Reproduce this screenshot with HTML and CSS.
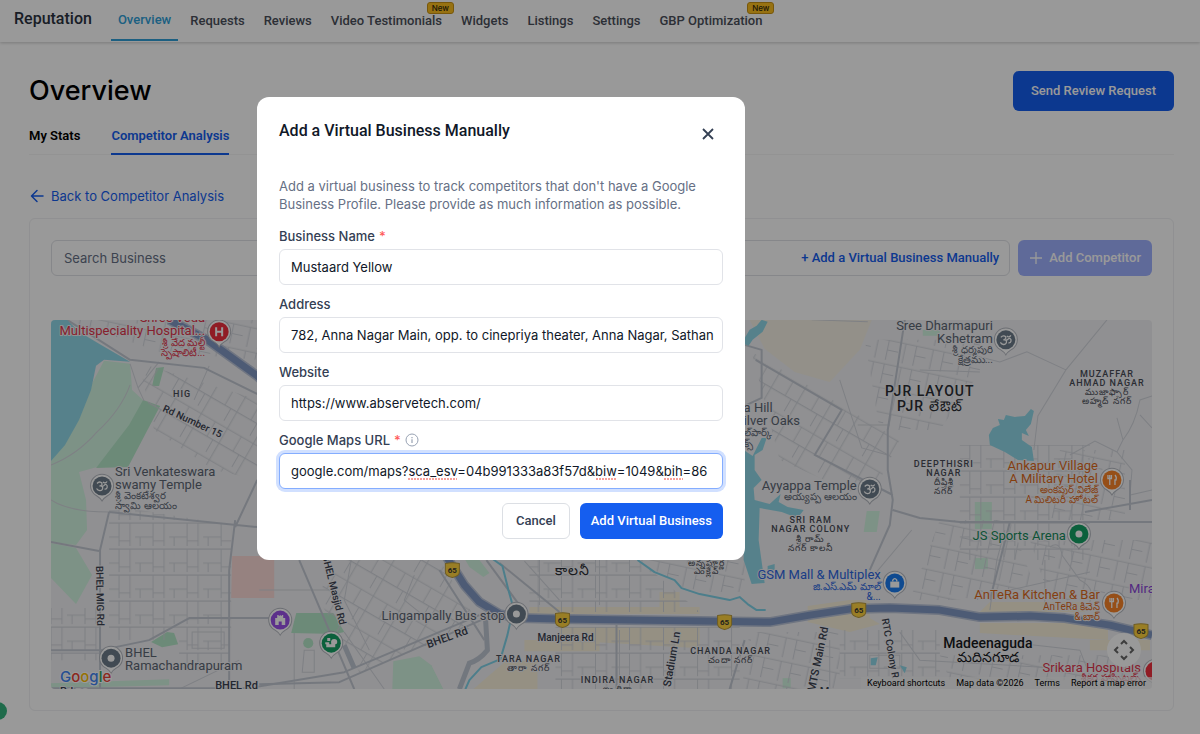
FILE: index.html
```html
<!DOCTYPE html>
<html lang="en">
<head>
<meta charset="utf-8">
<meta name="viewport" content="width=device-width, initial-scale=1">
<title>Reputation – Competitor Analysis</title>
<link rel="stylesheet" href="styles.css">
</head>
<body>
<header class="topbar">
  <span class="brand">Reputation</span>
  <nav class="topnav" aria-label="Reputation">
    <a class="navlink active" href="#overview">Overview</a>
    <a class="navlink" href="#requests">Requests</a>
    <a class="navlink" href="#reviews">Reviews</a>
    <a class="navlink" href="#video">Video Testimonials<span class="badge">New</span></a>
    <a class="navlink" href="#widgets">Widgets</a>
    <a class="navlink" href="#listings">Listings</a>
    <a class="navlink" href="#settings">Settings</a>
    <a class="navlink" href="#gbp">GBP Optimization<span class="badge">New</span></a>
  </nav>
</header>

<main class="page">
  <div class="page-head">
    <h1>Overview</h1>
    <button class="btn primary large" type="button">Send Review Request</button>
  </div>
  <nav class="tabs" aria-label="Overview sections">
    <a class="tab" href="#stats">My Stats</a>
    <a class="tab current" href="#competitors">Competitor Analysis</a>
  </nav>
  <a class="back" href="#back">
    <svg width="16" height="16" viewBox="0 0 16 16" aria-hidden="true"><path d="M14 8H3M8 2.500L2.500 8L8 13.500" fill="none" stroke="currentColor" stroke-width="1.500" stroke-linecap="round" stroke-linejoin="round"/></svg>
    Back to Competitor Analysis
  </a>

  <section class="card">
    <div class="search-row">
      <div class="search-box">
        <input class="search-input" type="text" placeholder="Search Business" aria-label="Search Business">
        <button class="link-btn" type="button">+ Add a Virtual Business Manually</button>
      </div>
      <button class="btn add" type="button">
        <svg width="14" height="14" viewBox="0 0 14 14" aria-hidden="true"><path d="M7 1V13M1 7H13" fill="none" stroke="currentColor" stroke-width="1.300"/></svg>
        Add Competitor
      </button>
    </div>

    <div class="map">
      <svg class="map-canvas" viewBox="52 320 1100 369" preserveAspectRatio="xMidYMid slice" role="img" aria-label="Map">
        <defs>
          <symbol id="pin" viewBox="-14 -14 28 30" overflow="visible">
            <path class="pin-edge" d="M0 15C-2 11-5 10.500-8 8A11.500 11.500 0 1 1 8 8C5 10.500 2 11 0 15Z"/>
            <circle r="9.500" fill="currentColor"/>
          </symbol>
          <symbol id="om" viewBox="-14 -14 28 30" overflow="visible">
            <path d="M-5-2.500C-3-5 0-4 0-2C0-.5-2 0-2.500 0C0-.5 1 1 .5 3C-.5 5.500-4 5-5.500 2.500M0 0C2 1 2-2 4-1.500C6-.5 5.500 3.500 2.500 3M1-4C2-2.500 4-2.800 5-4.500" class="om-line"/>
          </symbol>
          <symbol id="shield" viewBox="-9 -8 18 16" overflow="visible">
            <path d="M-7-6.500Q0-8 7-6.500V2Q7 6 0 7.500Q-7 6-7 2Z" class="shield-plate"/>
            <text class="shield-num" y="3">65</text>
          </symbol>
          <pattern id="blocks" width="34" height="26" patternUnits="userSpaceOnUse"><path class="street" d="M0 3H34M0 17H18M18 3V26M29 3V26M5 17V26M18 21H29"/></pattern>
          <pattern id="blocks-tilt" width="30" height="36" patternUnits="userSpaceOnUse" patternTransform="rotate(30)"><path class="street" d="M0 5H30M0 22H30M8 5V22M22 0V36M15 22V36"/></pattern>
          <pattern id="blocks-lean" width="28" height="24" patternUnits="userSpaceOnUse" patternTransform="rotate(12)"><path class="street" d="M0 4H28M6 4V24M17 4V24M17 14H28"/></pattern>
        </defs>

        <rect class="land" x="0" y="300" width="1300" height="410"/>

        <g class="park">
          <path d="M105 361L131 364L133 390L145 401L125 440L98 467L80 472L87 500L88 530L77 545L52 542V461Z"/>
          <path d="M52 543L77 548L93 575L77 604L52 578Z"/>
          <path class="dense" d="M144 400L161 406L129 467L97 468L130 425Z"/>
          <path class="dense" d="M157 368L165 367L160 386L153 386Z"/>
          <path class="dense" d="M152 642L168 632L175 633L179 644L163 647Z"/>
          <path d="M52 683L170 679V685L52 688Z"/>
          <path class="dense" d="M297 613H334L345 632L336 634L292 633Z"/>
          <path d="M394 661L420 656L432 665L444 689H393Z"/>
          <circle class="dense" cx="309" cy="643" r="5"/>
          <path d="M466 560H480L490 573L484 577L470 567Z"/>
          <path d="M867 511H880L877 532H864Z"/><path d="M975 502H992V529H975Z"/>
          <path d="M975 558H988V569H975Z"/><path d="M923 330H940V336H923Z"/><path d="M783 678H791V688H783Z"/>
        </g>
        <path class="sand" d="M750 320H872L860 350L830 382L795 372L765 349Z"/>
        <g class="shops">
          <path d="M530 607H700V614H530ZM560 627H700V648L560 640ZM660 592H680V614H660Z"/>
          <path d="M474 689L505 662L538 660V689ZM525 640H600V651H525Z"/>
          <path d="M808 606L850 600H870V618L880 624L850 632L808 622ZM980 612L990 602H1085V612ZM980 623H1080L1108 630V640L980 633ZM1090 640H1150V650H1090Z"/>
        </g>
        <path class="clinic" d="M233 556H275V598H232Z"/>

        <g>
          <path fill="url(#blocks)" d="M110 505L232 525V640H110ZM52 608H100V660H52ZM180 670H230V640H180Z"/>
          <path fill="url(#blocks-tilt)" d="M140 363L260 400V480L215 470L155 430ZM330 560H440L480 625L360 672L320 600Z"/>
          <path fill="url(#blocks-tilt)" d="M752 352L900 440L870 500L780 460Z"/>
          <path fill="url(#blocks)" d="M556 627H740V689H556ZM530 560H640L700 612H530ZM840 630H940V678H840Z"/>
          <path fill="url(#blocks-lean)" d="M865 340H980V372L940 430H880ZM940 520H1010L1040 600H910ZM1060 450H1125V520H1050ZM750 632H840V689H742ZM940 655H1130V680H950Z"/>
          <path fill="url(#blocks)" d="M960 445H1090V560H960Z"/>
          <path fill="url(#blocks-lean)" d="M68 320H258V360L160 352ZM1030 540H1152V600H1050ZM640 560H745V592H690Z"/>
        </g>

        <g class="street">
          <path d="M131 364L139 388L145 401M131 385Q122 410 98 432Q78 455 52 465M52 500Q70 512 110 512M139 388L160 362M210 366L195 400M240 660L180 689M193 632V648H225V632Z"/>
          <path d="M295 633V689M345 632L385 689M260 590H330M305 650H315V672H303ZM352 560L345 600L370 650M415 575L405 600L430 620M540 560V605M600 560V605M620 630V689"/>
          <path d="M1107 320Q1070 365 1066 370L1038 416L1034 450M960 352L1000 362L1027 352L1066 370M1117 418L1123 440L1117 452M1123 440Q1135 425 1140 400L1152 396M1140 415L1152 428M1070 455L1095 441L1117 452L1132 470L1130 495L1152 490"/>
          <path d="M812 320L868 322M840 380L862 448L888 455M858 425H890M920 370L980 372M912 530L870 580M1050 547Q1060 540 1062 555L1080 580Q1100 590 1085 610"/>
          <path d="M1005 530L997 560L990 610M1045 560V605M1010 590L1090 572M900 632L920 660L1060 668M990 640L1080 650L1095 689M830 640V689M870 655H900V668H870ZM525 561L560 600"/>
        </g>
        <g class="road">
          <path d="M110 512L258 527M110 512L101 550V689M52 542L100 551M236 520L230 570V689M258 480L236 527M52 650H102L150 640L190 618H270M52 688H250L345 672L480 615"/>
          <path d="M68 320L95 337L131 360L205 368L260 395M300 560L355 689M260 684L340 682L500 612M485 640L440 570M745 640L730 689M617 625V689"/>
          <path d="M905 320L888 430V470L893 500L890 525L870 570M756 360L842 410L815 455L893 495M893 510L920 518L960 522H1152M1010 522L990 600M1085 512L1152 500M1130 480V510"/>
          <path d="M745 345L762 350V398L745 406M500 563L560 612M487 560L520 605"/>
        </g>
        <path class="avenue" d="M486 616L488 650Q480 660 470 663L460 689M345 645L355 668"/>

        <g class="water">
          <path d="M52 320H68L80 332L100 344L131 362L105 360L97 366L92 390L80 420L66 445L52 461Z"/>
          <path d="M744 340L750 330L757 326L762 320L768 322L763 332L753 340L749 346L744 344Z"/>
          <path d="M744 450L753 456L762 438L767 438L763 450L755 455L755 470L762 480L754 488L755 500L770 504L781 494L779 502L788 507L804 510L798 518L782 512L760 508L759 540L765 583L752 584L744 560Z"/>
          <path d="M990 445L989 435L993 428L1000 425L998 419L1004 420L1006 415L1015 417L1025 416L1031 409L1034 411L1031 424L1026 430L1029 436L1022 433L1022 440L1032 447L1034 461L1018 460L1005 452Z"/>
          <path d="M768 566L775 564V570H768ZM871 658L878 657L876 665H871ZM900 665L907 667L905 673Z"/>
        </g>
        <path class="stream" d="M492 558L503 566L509 590L514 608L508 635L501 659L482 667L470 680L466 689M638 560L655 572L675 580L682 588L700 594L730 600L740 597L748 604L757 610H766"/>
        <path class="highway-edge" d="M170 320L208 340L258 376L443 550L465 585L480 602L500 614L520 618L560 619L700 621L770 622L810 615L850 609L890 608L940 610L980 617L1030 616L1065 618L1110 625L1152 635"/>
        <path class="highway" d="M170 320L208 340L258 376L443 550L465 585L480 602L500 614L520 618L560 619L700 621L770 622L810 615L850 609L890 608L940 610L980 617L1030 616L1065 618L1110 625L1152 635"/>

        <g class="roadname">
          <text transform="translate(163 411) rotate(25)">Rd Number 15</text>
          <text transform="translate(97 566) rotate(89)">BHEL MIG Rd</text>
          <text transform="translate(323 556) rotate(76)">BHEL Masjid Rd</text>
          <text class="wide" transform="translate(429 648) rotate(-20)">BHEL Rd</text>
          <text class="wide" x="216" y="689">BHEL Rd</text>
          <text x="538" y="641">Manjeera Rd</text>
          <text class="wide" transform="translate(671 687) rotate(-80)">Stadium Ln</text>
          <text class="wide" transform="translate(815 692) rotate(-78)">MTS Main Rd</text>
          <text transform="translate(882 619) rotate(80)">RTC Colony R</text>
          <text class="wide" x="61" y="695">Rd no</text>
          <text class="wide" x="820" y="695">Ma...</text>
        </g>

        <g class="area">
          <text x="183" y="397">HIG</text>
          <text x="529" y="662">TARA NAGAR<tspan x="529" dy="9">తారా నగర్</tspan></text>
          <text x="618" y="683">INDIRA NAGAR<tspan x="618" dy="9">ఇందిరా</tspan></text>
          <text x="731" y="654">CHANDA NAGAR<tspan x="731" dy="9">చందా నగర్</tspan></text>
          <text x="811" y="523">SRI RAM<tspan x="811" dy="9">NAGAR COLONY</tspan><tspan x="811" dy="10">శ్రీ రామ్</tspan><tspan x="811" dy="9">నగర్ కాలనీ</tspan></text>
          <text x="944" y="467">DEEPTHISRI<tspan x="944" dy="9">NAGAR</tspan><tspan x="944" dy="9">దీప్తిశ్రీ</tspan><tspan x="944" dy="9">నగర్</tspan></text>
          <text x="1107" y="377">MUZAFFAR<tspan x="1107" dy="9">AHMAD NAGAR</tspan><tspan x="1107" dy="9">ముజాఫ్ఫార్</tspan><tspan x="1107" dy="9">అహ్మద్ నగర్</tspan></text>
          <text class="big" x="930" y="396">PJR LAYOUT<tspan x="930" dy="15">PJR లేఔట్</tspan></text>
          <text x="707" y="566">అన్నపూర్ణ<tspan x="707" dy="8">ఎంక్లేవ్</tspan></text>
          <text class="big" x="573" y="575">కాలనీ</text>
        </g>
        <g class="town"><text x="988" y="648">Madeenaguda<tspan x="988" dy="14">మదినగూడ</tspan></text></g>

        <g class="place gray">
          <text x="116" y="476">Sri Venkateswara<tspan x="116" dy="13">swamy Temple</tspan><tspan class="te" x="116" dy="10">శ్రీ వెంకటేశ్వర</tspan><tspan class="te" x="116" dy="10">స్వామి ఆలయం</tspan></text>
          <text x="126" y="657">BHEL<tspan x="126" dy="13">Ramachandrapuram</tspan></text>
          <text class="end" x="506" y="620">Lingampally Bus stop</text>
          <text class="end" x="857" y="490">Ayyappa Temple<tspan class="te" x="857" dy="10">అయ్యప్ప ఆలయం</tspan></text>
          <text class="end" x="993" y="330">Sree Dharmapuri<tspan x="993" dy="13">Kshetram</tspan><tspan class="te" x="993" dy="10">శ్రీ ధర్మపురి</tspan><tspan class="te" x="993" dy="10">క్షేత్రము...</tspan></text>
          <text x="744" y="412">a Hill<tspan x="744" dy="13">ilver Oaks</tspan><tspan class="te" x="744" dy="11">ల్‌పార్క్</tspan><tspan class="te" x="744" dy="11">క్స్</tspan></text>
        </g>
        <g class="place red">
          <text class="end" x="206" y="322">Shree Veda<tspan x="206" dy="13">Multispeciality Hospital...</tspan><tspan class="te" x="206" dy="11">శ్రీ వేద మల్టీ</tspan><tspan class="te" x="206" dy="10">స్పెషాలిటీ...</tspan></text>
          <text class="end" x="1141" y="672">Srikara Hospitals<tspan class="te" x="1141" dy="9">శ్రీకర హాస్పిటల్స్</tspan></text>
        </g>
        <g class="place orange">
          <text class="end" x="1098" y="470">Ankapur Village<tspan x="1098" dy="13">A Military Hotel</tspan><tspan class="te" x="1098" dy="10">అంకపుర్ విలేజ్</tspan><tspan class="te" x="1098" dy="10">A మిలిటరీ హోటల్</tspan></text>
          <text class="end" x="1100" y="599">AnTeRa Kitchen &amp; Bar<tspan class="te" x="1100" dy="11">AnTeRa కిచెన్</tspan><tspan class="te" x="1100" dy="10">&amp; బార్</tspan></text>
        </g>
        <g class="place green"><text class="end" x="1066" y="540">JS Sports Arena</text></g>
        <g class="place blue"><text class="end" x="881" y="579">GSM Mall &amp; Multiplex<tspan class="te" x="881" dy="11">జి.ఎస్.ఎమ్ మాల్</tspan><tspan class="te" x="881" dy="10">&amp;...</tspan></text></g>
        <g class="place purple"><text x="1129" y="593">Mira</text></g>

        <g transform="translate(220 332)" class="pin-red"><use href="#pin" x="-14" y="-14" width="28" height="30"/><path class="glyph" d="M-3-4.500V4.500M3-4.500V4.500M-3 0H3"/></g>
        <g transform="translate(103 486)" class="pin-gray"><use href="#pin" x="-14" y="-14" width="28" height="30"/><use href="#om" x="-14" y="-14" width="28" height="30"/></g>
        <g transform="translate(1006 340)" class="pin-gray"><use href="#pin" x="-14" y="-14" width="28" height="30"/><use href="#om" x="-14" y="-14" width="28" height="30"/></g>
        <g transform="translate(870 489)" class="pin-gray"><use href="#pin" x="-14" y="-14" width="28" height="30"/><use href="#om" x="-14" y="-14" width="28" height="30"/></g>
        <g transform="translate(112 658)" class="pin-gray"><use href="#pin" x="-14" y="-14" width="28" height="30"/><circle class="dot" r="3.500"/></g>
        <g transform="translate(517 614)" class="pin-gray"><use href="#pin" x="-14" y="-14" width="28" height="30"/><circle class="dot" r="3.500"/></g>
        <g transform="translate(1079 534)" class="pin-green"><use href="#pin" x="-14" y="-14" width="28" height="30"/><circle class="dot" r="3.500"/></g>
        <g transform="translate(332 643)" class="pin-green"><use href="#pin" x="-14" y="-14" width="28" height="30"/><path class="dot" d="M-6-1H-2V1H0Q-1-4 3-4Q6-4 6-1Q6 1 4 1V4H-5V1H-6ZM-4-5H-1V-2H-4Z"/></g>
        <g transform="translate(281 620)" class="pin-purple"><use href="#pin" x="-14" y="-14" width="28" height="30"/><path class="dot" d="M-5 5V-2H-3V-5H-1.500V-4H-.5V-5H.5V-4H1.500V-5H3V-2H5V5H1.500V1.500H-1.500V5Z"/></g>
        <g transform="translate(895 583)" class="pin-blue"><use href="#pin" x="-14" y="-14" width="28" height="30"/><path class="dot" d="M-4.500-1.500H4.500V4.500H-4.500Z"/><path class="bag" d="M-2-1.500V-3Q0-6 2-3V-1.500"/></g>
        <g transform="translate(1112 480)" class="pin-orange"><use href="#pin" x="-14" y="-14" width="28" height="30"/><path class="bag" d="M-4-5V-1.500H-.5V-5M-2.200-5V5M3-5Q5-3 4 0H3V5"/></g>
        <g transform="translate(1114 603)" class="pin-orange"><use href="#pin" x="-14" y="-14" width="28" height="30"/><path class="bag" d="M-4-5V-1.500H-.5V-5M-2.200-5V5M3-5Q5-3 4 0H3V5"/></g>
        <g transform="translate(1155 671)" class="pin-red"><use href="#pin" x="-14" y="-14" width="28" height="30"/></g>

        <use href="#shield" x="444" y="562" width="18" height="16"/>
        <use href="#shield" x="554" y="612" width="18" height="16"/>
        <use href="#shield" x="716" y="614" width="18" height="16"/>
        <use href="#shield" x="850" y="602" width="18" height="16"/>
        <use href="#shield" x="1132" y="623" width="18" height="16"/>

        <text class="logo" x="61" y="682"><tspan class="g-blue">G</tspan><tspan class="g-red">o</tspan><tspan class="g-yellow">o</tspan><tspan class="g-blue">g</tspan><tspan class="g-green">l</tspan><tspan class="g-red">e</tspan></text>
      </svg>
      <button class="map-control" type="button" aria-label="Map camera controls">
        <svg width="22" height="22" viewBox="0 0 22 22" aria-hidden="true"><path d="M8 5L11 2L14 5M8 17L11 20L14 17M5 8L2 11L5 14M17 8L20 11L17 14" fill="none" stroke="currentColor" stroke-width="2"/></svg>
      </button>
      <div class="map-foot">
        <button class="foot-item" type="button">Keyboard shortcuts</button>
        <span class="foot-item">Map data ©2026</span>
        <a class="foot-item" href="#terms">Terms</a>
        <a class="foot-item" href="#report">Report a map error</a>
      </div>
    </div>
  </section>
</main>

<button class="helper" type="button" aria-label="Open help"></button>

<div class="overlay">
  <form class="modal" role="dialog" aria-modal="true" aria-labelledby="modal-title">
    <div class="modal-head">
      <h2 id="modal-title">Add a Virtual Business Manually</h2>
      <button class="close" type="button" aria-label="Close">
        <svg width="12" height="12" viewBox="0 0 12 12" aria-hidden="true"><path d="M1 1L11 11M11 1L1 11" fill="none" stroke="currentColor" stroke-width="1.800"/></svg>
      </button>
    </div>
    <p class="intro">Add a virtual business to track competitors that don't have a Google Business Profile. Please provide as much information as possible.</p>
    <div class="field">
      <label for="name">Business Name <span class="req">*</span></label>
      <input class="text" id="name" type="text" value="Mustaard Yellow">
    </div>
    <div class="field">
      <label for="address">Address</label>
      <input class="text" id="address" type="text" value="782, Anna Nagar Main, opp. to cinepriya theater, Anna Nagar, Sathan">
    </div>
    <div class="field">
      <label for="site">Website</label>
      <input class="text" id="site" type="text" value="https://www.abservetech.com/">
    </div>
    <div class="field">
      <label for="url">Google Maps URL <span class="req">*</span>
        <svg class="info" width="14" height="14" viewBox="0 0 14 14" aria-hidden="true"><circle cx="7" cy="7" r="6" fill="none" stroke="currentColor"/><path d="M7 6.300V10M7 4V5.200" stroke="currentColor" stroke-width="1.200"/></svg>
      </label>
      <div class="checked">
        <input class="text focused" id="url" type="text" spellcheck="false" value="google.com/maps?sca_esv=04b991333a83f57d&amp;biw=1049&amp;bih=86">
        <svg class="squiggle" width="444" height="36" viewBox="0 0 444 36" aria-hidden="true"><path d="M129 26H178M317 26H338M385 26H404"/></svg>
      </div>
    </div>
    <div class="actions">
      <button class="btn plain" type="button">Cancel</button>
      <button class="btn primary snug" type="submit">Add Virtual Business</button>
    </div>
  </form>
</div>
</body>
</html>
```
FILE: styles.css
```css
* { box-sizing: border-box; }
body {
  margin: 0;
  min-height: 100vh;
  background: #fff;
  color: #000;
  font: 400 13px/18px Inter, "Noto Sans", sans-serif;
}
a { color: inherit; text-decoration: none; }
button, input { font: inherit; color: inherit; }
button { cursor: pointer; }
h1, h2, p { margin: 0; }

/* Top bar */
.topbar {
  display: flex;
  align-items: center;
  height: 42px;
  padding-left: 14px;
  box-shadow: 0 1px 3px rgba(0, 0, 0, .2);
  font-family: Roboto, sans-serif;
  font-weight: 500;
}
.brand { margin: 0 19px 4px 0; font-size: 16px; color: #2b3240; }
.topnav { display: flex; align-self: stretch; gap: 5px; }
.navlink {
  position: relative;
  height: 41px;
  padding: 12px 7px 0;
  color: #4a4f5a;
}
.navlink.active { padding-top: 11px; color: #2f9fd8; border-bottom: 2px solid #2f9fd8; }
.badge {
  position: absolute;
  top: 2px;
  right: -5px;
  padding: 0 4px;
  border: 1px solid #c79214;
  border-radius: 3px;
  background: #fcbf1e;
  color: #30260a;
  font: 500 8px/10px Inter, sans-serif;
}

/* Page */
.page { padding: 29px 26px 22px 29px; }
.page-head { display: flex; align-items: center; justify-content: space-between; }
h1 { font: 500 27px/36px Inter, sans-serif; }
.btn {
  display: inline-flex;
  align-items: center;
  justify-content: center;
  gap: 6px;
  height: 36px;
  padding: 0 12px;
  border: 1px solid transparent;
  border-radius: 6px;
  font: 500 13px/18px Roboto, sans-serif;
}
.primary { background: #155eef; color: #fff; }
.large { height: 40px; padding: 0 17px; }
.plain { background: #fff; border-color: #dcdfe4; color: #344054; padding: 0 13px; }
.add { background: #9fb1ff; color: #fff; }
.add, .snug { padding: 0 10px; }

.tabs {
  display: flex;
  gap: 31px;
  margin-top: 16px;
  box-shadow: inset 0 -1px #f6f6f6;
  font: 600 13px/18px Roboto, sans-serif;
}
.tab { padding-bottom: 8px; border-bottom: 2px solid transparent; }
.current { color: #155eef; border-color: #155eef; }
.back { display: flex; align-items: center; gap: 6px; width: fit-content; margin-top: 32px; color: #155eef; }

.card { margin-top: 13px; padding: 21px; border: 1px solid #f0f1f3; border-radius: 6px; }
.search-row { display: flex; gap: 8px; }
.search-box {
  display: flex;
  flex: 1;
  height: 36px;
  padding: 0 10px 0 12px;
  border: 1px solid #dfe1e6;
  border-radius: 6px;
}
.search-input { flex: 1; min-width: 0; padding: 0; border: 0; outline: 0; background: none; }
.search-input::placeholder { color: #667085; opacity: 1; }
.link-btn { padding: 0; border: 0; background: none; color: #155eef; font: 500 13px/18px Roboto, sans-serif; }

/* Map */
.map { position: relative; margin-top: 44px; height: 369px; border-radius: 4px; overflow: hidden; }
.map-canvas { display: block; width: 100%; height: 100%; font-family: Roboto, "Noto Sans", sans-serif; }
.land { fill: #f0f0f3; }
.water { fill: #90d8e8; }
.park { fill: #d0f3df; }
.dense { fill: #b5e6c8; }
.sand { fill: #f5f0e4; }
.shops { fill: #f8f0da; }
.clinic { fill: #fbd9d6; }
.street { fill: none; stroke: #d2d5dc; stroke-width: 1; }
.road { fill: none; stroke: #c3c9d3; stroke-width: 2; stroke-linejoin: round; }
.avenue { fill: none; stroke: #bfc6d2; stroke-width: 5; }
.stream { fill: none; stroke: #7fd2e8; stroke-width: 2; stroke-linejoin: round; }
.highway-edge { fill: none; stroke: #b9c3d8; stroke-width: 10; stroke-linejoin: round; }
.highway { fill: none; stroke: #8198c4; stroke-width: 7; stroke-linejoin: round; }
.roadname, .area, .town, .place { paint-order: stroke; stroke: #f0f0f3; stroke-width: 2; stroke-linejoin: round; }
.roadname { font-size: 10px; font-weight: 500; fill: #3b4250; }
.roadname .wide { font-size: 11px; }
.area { font-size: 9px; font-weight: 500; letter-spacing: 1px; fill: #484c56; text-anchor: middle; }
.area .big { font-size: 14px; fill: #2a2d34; }
.town { font-size: 14px; font-weight: 500; fill: #17191d; text-anchor: middle; }
.place { font-size: 13px; }
.place .te { font-size: 10px; }
.end { text-anchor: end; }
.gray { fill: #5c6674; }
.red { fill: #e0344c; }
.orange { fill: #dd6a1c; }
.green { fill: #168a5c; }
.blue { fill: #2c66e0; }
.purple { fill: #8a45d8; }
.pin-edge { fill: #fff; stroke: #b4b8c0; stroke-width: 1; }
.pin-gray { color: #6d7c8a; }
.pin-red { color: #f0303e; }
.pin-green { color: #14a065; }
.pin-purple { color: #9a50e8; }
.pin-blue { color: #1a7cf0; }
.pin-orange { color: #fa8428; }
.dot { fill: #fff; }
.glyph { fill: none; stroke: #fff; stroke-width: 2; }
.bag, .om-line { fill: none; stroke: #fff; stroke-width: 1.3; }
.shield-plate { fill: #ffd23f; stroke: #b89a3c; }
.shield-num { font: 700 8px Roboto, sans-serif; fill: #3c3a30; text-anchor: middle; }
.logo { font: 500 15px Inter, sans-serif; paint-order: stroke; stroke: #fff; stroke-width: 2; }
.g-blue { fill: #4285f4; }
.g-red { fill: #ea4335; }
.g-yellow { fill: #fbbc05; }
.g-green { fill: #34a853; }
.map-control {
  position: absolute;
  right: 11px;
  bottom: 22px;
  display: grid;
  place-items: center;
  width: 34px;
  height: 34px;
  padding: 0;
  border: 0;
  border-radius: 50%;
  background: #fff;
  color: #666;
}
.map-foot {
  position: absolute;
  right: 0;
  bottom: 0;
  display: flex;
  gap: 11px;
  padding: 0 6px;
  background: rgba(245, 245, 245, .7);
  font: 400 9px/12px Roboto, sans-serif;
}
.foot-item { padding: 0; border: 0; background: none; }
.helper {
  position: fixed;
  left: -11px;
  bottom: 14px;
  width: 18px;
  height: 18px;
  padding: 0;
  border: 0;
  border-radius: 50%;
  background: #35b37e;
}

/* Dialog */
.overlay {
  position: fixed;
  inset: 0;
  display: flex;
  align-items: flex-start;
  justify-content: center;
  padding: 97px 198px 0 0;
  background: rgba(0, 0, 0, .4);
}
.modal {
  display: flex;
  flex-direction: column;
  width: 488px;
  padding: 22px 22px 21px;
  border-radius: 12px;
  background: #fff;
}
.modal-head { display: flex; justify-content: space-between; align-items: flex-start; }
h2 { font: 500 16px/24px Roboto, sans-serif; color: #101828; }
.close {
  display: grid;
  place-items: center;
  width: 30px;
  height: 30px;
  padding: 0;
  border: 0;
  background: none;
  color: #344054;
}
.intro { margin: 28px 0 14px; color: #667085; }
.field { display: flex; flex-direction: column; gap: 4px; margin-bottom: 10px; }
label { display: flex; align-items: center; gap: 4px; height: 18px; color: #344054; font-weight: 500; }
.req { color: #ff5b5b; }
.info { color: #98a2b3; }
.text {
  width: 100%;
  height: 36px;
  padding: 0 2px 0 11px;
  border: 1px solid #e1e3e8;
  border-radius: 6px;
  outline: 0;
  background: #fff;
  color: #101828;
}
.focused { border-color: #84adff; box-shadow: 0 0 0 3px #d1e0ff; }
.checked { position: relative; display: flex; }
.squiggle { position: absolute; left: 0; top: 0; pointer-events: none; }
.squiggle path { stroke: #f04438; stroke-dasharray: 2 1; }
.actions { display: flex; justify-content: flex-end; gap: 10px; margin-top: 4px; }
```
